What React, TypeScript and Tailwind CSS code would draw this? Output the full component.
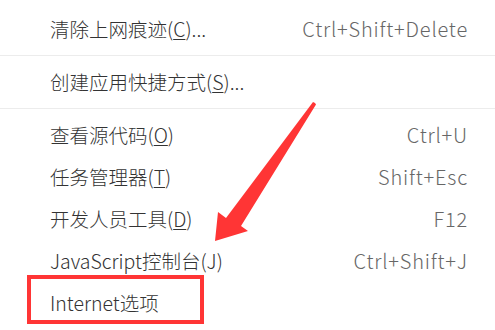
import React from "react";

type Item = { label: React.ReactNode; shortcut?: string };

const font = { fontFamily: '"Microsoft YaHei", "Noto Sans CJK SC", "Noto Sans", sans-serif' };

function Key({ k }: { k: string }) {
  return (
    <>
      (<span className="underline underline-offset-2">{k}</span>)
    </>
  );
}

const groups: Item[][] = [
  [{ label: <>清除上网痕迹<Key k="C" />...</>, shortcut: "Ctrl+Shift+Delete" }],
  [{ label: <>创建应用快捷方式<Key k="S" />...</> }],
  [
    { label: <>查看源代码<Key k="O" /></>, shortcut: "Ctrl+U" },
    { label: <>任务管理器<Key k="T" /></>, shortcut: "Shift+Esc" },
    { label: <>开发人员工具<Key k="D" /></>, shortcut: "F12" },
    { label: <>JavaScript控制台(J)</>, shortcut: "Ctrl+Shift+J" },
    { label: <>Internet选项</> },
  ],
];

export default function App() {
  return (
    <div className="relative w-[495px] h-[330px] bg-white overflow-hidden text-[19.5px] text-[#333] font-light" style={font}>
      <div className="flex flex-col pt-[8px]">
        {groups.map((group, gi) => (
          <div key={gi} className={gi < groups.length - 1 ? "border-b border-[#ececec] pb-[5px] mb-[5px]" : ""}>
            {group.map((item, i) => (
              <div key={i} className="flex items-center justify-between h-[42px] pl-[50px] pr-[27px]">
                <span className="whitespace-nowrap">{item.label}</span>
                {item.shortcut && (
                  <span className="text-[#666] text-[20px] tracking-[0.8px] whitespace-nowrap">{item.shortcut}</span>
                )}
              </div>
            ))}
          </div>
        ))}
      </div>

      {/* highlight box */}
      <div className="absolute left-[27px] top-[275px] w-[177px] h-[49px] border-[4px] border-[#ff3535]" />

      {/* arrow */}
      <svg className="absolute left-0 top-0" width="495" height="330" viewBox="0 0 495 330">
        <path d="M315 103 L316 104.5 L241 226 L248 231 L215 241 L218 212 L226 218 L313 102 Z" fill="#ff3535" />
      </svg>
    </div>
  );
}
